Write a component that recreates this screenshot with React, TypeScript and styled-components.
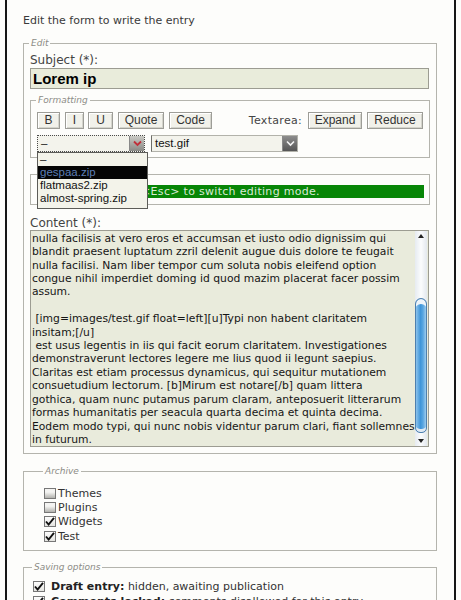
import React from "react";
import styled, { createGlobalStyle } from "styled-components";

const GlobalStyle = createGlobalStyle`
  html, body {
    margin: 0;
    padding: 0;
    overflow: hidden;
    background: #fdfdfb;
    font-family: "DejaVu Sans", Verdana, sans-serif;
  }
`;

const Frame = styled.div`
  box-sizing: border-box;
  height: 600px;
  margin: 0 5px;
  padding: 14px 17px 0 16px;
  border-left: 2px solid #161616;
  border-right: 2px solid #161616;
  background: #fdfdfb;
  overflow: hidden;
`;

const Intro = styled.p`
  margin: 0;
  font-size: 11px;
  line-height: 13px;
  color: #3a3a3a;
`;

const Fieldset = styled.fieldset<{ $top: number; $pad: string }>`
  margin: ${(p) => p.$top}px 0 0;
  padding: ${(p) => p.$pad};
  border: 1px solid #b4b4ad;
  min-width: 0;
  position: relative;
`;

const Legend = styled.legend`
  margin-left: -1px;
  padding: 0 2px;
  font-size: 9px;
  line-height: 11px;
  font-style: italic;
  color: #8c8c86;
`;

const Label = styled.div<{ $top: number }>`
  margin-top: ${(p) => p.$top}px;
  font-size: 12px;
  line-height: 14px;
  color: #444;
`;

const SubjectInput = styled.div`
  box-sizing: border-box;
  height: 21px;
  margin-top: 1px;
  width: 399px;
  padding: 0 2px;
  border: 1px solid #9c9c92;
  background: #e9ecdb;
  font-family: "Liberation Sans", Arial, sans-serif;
  font-weight: bold;
  font-size: 15px;
  line-height: 19px;
  color: #000;
`;

const ButtonRow = styled.div`
  display: flex;
  align-items: center;
  height: 17px;
`;

const ToolButton = styled.button<{ $w: number; $gap?: number }>`
  box-sizing: border-box;
  width: ${(p) => p.$w}px;
  height: 17px;
  margin-left: ${(p) => p.$gap ?? 5}px;
  padding: 0;
  border: 1px solid #9d9d97;
  border-radius: 0;
  box-shadow: inset 1px 1px 0 #ffffff, inset -1px -1px 0 #d4d4cc;
  background: #f1f1ea;
  font-family: "Liberation Sans", Arial, sans-serif;
  font-size: 12px;
  line-height: 15px;
  color: #333;
  &:first-child {
    margin-left: 0;
  }
`;

const Spacer = styled.div`
  flex: 1;
`;

const AreaCaption = styled.span`
  font-size: 11px;
  color: #444;
  letter-spacing: 0.3px;
`;

const SelectRow = styled.div`
  display: flex;
  gap: 6px;
  margin-top: 6px;
  height: 17px;
`;

const SelectBox = styled.div<{ $w: number; $focused?: boolean }>`
  position: relative;
  box-sizing: border-box;
  width: ${(p) => p.$w}px;
  height: 17px;
  display: flex;
  border: 1px solid ${(p) => (p.$focused ? "#4a4a4a" : "#b2b2aa")};
  border-style: ${(p) => (p.$focused ? "dotted" : "solid")};
  border-left-color: ${(p) => (p.$focused ? "#4a4a4a" : "#6d6d68")};
  background: #f3f3ec;
`;

const SelectText = styled.span`
  flex: 1;
  padding-left: 3px;
  font-family: "Liberation Sans", Arial, sans-serif;
  font-size: 11.5px;
  line-height: 15px;
  color: #111;
`;

const ArrowButton = styled.span<{ $dark?: boolean }>`
  width: 14px;
  height: 15px;
  display: flex;
  align-items: center;
  justify-content: center;
  border-left: 1px solid #888;
  background: ${(p) =>
    p.$dark
      ? "linear-gradient(#8d8d8d, #555)"
      : "linear-gradient(#c9c9c4, #8a8a86)"};
`;

const Popup = styled.ul`
  position: absolute;
  top: 16px;
  left: -1px;
  width: 111px;
  margin: 0;
  padding: 0 0 3px;
  list-style: none;
  box-sizing: border-box;
  border: 1px solid #5c5c58;
  background: #f3f3ea;
  z-index: 5;
`;

const PopupItem = styled.li<{ $active?: boolean }>`
  height: 13px;
  padding-left: 2px;
  font-family: "Liberation Sans", Arial, sans-serif;
  font-size: 11.5px;
  line-height: 13px;
  color: ${(p) => (p.$active ? "#5d7fb6" : "#111")};
  background: ${(p) => (p.$active ? "#050505" : "transparent")};
`;

const ModeBar = styled.div`
  height: 13px;
  background: #078607;
  color: #d9ead6;
  font-size: 11px;
  line-height: 13px;
  text-align: center;
  letter-spacing: 0.3px;
`;

const TextArea = styled.div`
  box-sizing: border-box;
  width: 399px;
  height: 217px;
  display: flex;
  border: 1px solid #9c9c92;
  background: #e9ebdc;
`;

const TextPane = styled.div`
  flex: 1;
  overflow: hidden;
  padding-left: 1px;
`;

const TextBody = styled.div`
  margin-top: -12.6px;
  white-space: pre;
  font-size: 10.75px;
  line-height: 13.4px;
  color: #151515;
`;

const ScrollBar = styled.div`
  width: 12px;
  margin-right: 1px;
  display: flex;
  flex-direction: column;
  background: linear-gradient(90deg, #e6ebf1, #fbfcfd 50%, #e3e8ee);
`;

const ScrollArrow = styled.div`
  height: 10px;
  display: flex;
  align-items: center;
  justify-content: center;
`;

const ScrollTrack = styled.div`
  flex: 1;
  display: flex;
  flex-direction: column;
`;

const Thumb = styled.div`
  box-sizing: border-box;
  border: 1px solid #4d7fae;
  border-radius: 6px 6px 5px 5px;
  background: linear-gradient(90deg, #8cc3ec, #3f95d9 45%, #5aa6e0 70%, #9ccbee);
  box-shadow: inset 0 6px 0 -1px #eef4fa, inset 0 -4px 0 -1px #dfe9f3;
`;

const CheckList = styled.div`
  display: flex;
  flex-direction: column;
`;

const CheckRow = styled.div<{ $gap: number }>`
  display: flex;
  align-items: center;
  gap: ${(p) => p.$gap}px;
  height: 14.4px;
  font-size: 11px;
  color: #333;
  b {
    font-weight: bold;
    color: #222;
  }
`;

const Box = styled.span<{ $checked?: boolean }>`
  box-sizing: border-box;
  width: 12px;
  height: 11px;
  display: flex;
  align-items: center;
  justify-content: center;
  border: 1px solid #777;
  background: ${(p) =>
    p.$checked
      ? "linear-gradient(#fdfdfd, #e4e4e0)"
      : "linear-gradient(#f4f4f2 35%, #b2b2ae)"};
`;

const Check = ({ checked }: { checked?: boolean }) => (
  <Box $checked={checked}>
    {checked && (
      <svg width="10" height="9" viewBox="0 0 10 9">
        <path d="M1 4.5 L3.6 7.5 L9 0.8" fill="none" stroke="#111" strokeWidth="1.9" />
      </svg>
    )}
  </Box>
);

const contentLines = [
  "molestie consequat, vel illum dolore eu feugiat",
  "nulla facilisis at vero eros et accumsan et iusto odio dignissim qui",
  "blandit praesent luptatum zzril delenit augue duis dolore te feugait",
  "nulla facilisi. Nam liber tempor cum soluta nobis eleifend option",
  "congue nihil imperdiet doming id quod mazim placerat facer possim",
  "assum.",
  "",
  " [img=images/test.gif float=left][u]Typi non habent claritatem",
  "insitam;[/u]",
  " est usus legentis in iis qui facit eorum claritatem. Investigationes",
  "demonstraverunt lectores legere me lius quod ii legunt saepius.",
  "Claritas est etiam processus dynamicus, qui sequitur mutationem",
  "consuetudium lectorum. [b]Mirum est notare[/b] quam littera",
  "gothica, quam nunc putamus parum claram, anteposuerit litterarum",
  "formas humanitatis per seacula quarta decima et quinta decima.",
  "Eodem modo typi, qui nunc nobis videntur parum clari, fiant sollemnes",
  "in futurum.",
];

const archives = [
  { name: "Themes", on: false },
  { name: "Plugins", on: false },
  { name: "Widgets", on: true },
  { name: "Test", on: true },
];

const files = ["–", "gespaa.zip", "flatmaas2.zip", "almost-spring.zip"];

export default function App() {
  const thumbOffset = 57;
  const thumbHeight = 135;

  return (
    <>
      <GlobalStyle />
      <Frame>
        <Intro>Edit the form to write the entry</Intro>

        <Fieldset $top={11} $pad="0 6px 6px 6px">
          <Legend>Edit</Legend>
          <Label $top={4}>Subject (*):</Label>
          <SubjectInput>Lorem ip</SubjectInput>

          <Fieldset $top={6} $pad="6px 6px 5px 6px">
            <Legend>Formatting</Legend>
            <ButtonRow>
              <ToolButton $w={23}>B</ToolButton>
              <ToolButton $w={19}>I</ToolButton>
              <ToolButton $w={25} $gap={4}>U</ToolButton>
              <ToolButton $w={46}>Quote</ToolButton>
              <ToolButton $w={43}>Code</ToolButton>
              <Spacer />
              <AreaCaption>Textarea:</AreaCaption>
              <ToolButton $w={54} $gap={6}>Expand</ToolButton>
              <ToolButton $w={56}>Reduce</ToolButton>
            </ButtonRow>
            <SelectRow>
              <SelectBox $w={108} $focused>
                <SelectText>–</SelectText>
                <ArrowButton>
                  <svg width="9" height="7" viewBox="0 0 9 7">
                    <path d="M1 1.5 L4.5 5 L8 1.5" fill="none" stroke="#c0303a" strokeWidth="1.8" />
                  </svg>
                </ArrowButton>
                <Popup>
                  {files.map((f, i) => (
                    <PopupItem key={f} $active={i === 1}>
                      {f}
                    </PopupItem>
                  ))}
                </Popup>
              </SelectBox>
              <SelectBox $w={147}>
                <SelectText>test.gif</SelectText>
                <ArrowButton $dark>
                  <svg width="9" height="7" viewBox="0 0 9 7">
                    <path d="M1 1.5 L4.5 5 L8 1.5" fill="none" stroke="#f4f4f4" strokeWidth="1.6" />
                  </svg>
                </ArrowButton>
              </SelectBox>
            </SelectRow>
          </Fieldset>

          <Fieldset $top={16} $pad="10px 5px 6px 6px">
            <ModeBar>&lt;Esc&gt; to switch editing mode.</ModeBar>
          </Fieldset>

          <Label $top={11}>Content (*):</Label>
          <TextArea>
            <TextPane>
              <TextBody>{contentLines.join("\n")}</TextBody>
            </TextPane>
            <ScrollBar>
              <ScrollArrow>
                <svg width="6" height="4" viewBox="0 0 6 4">
                  <path d="M0 4 L3 0 L6 4 Z" fill="#222" />
                </svg>
              </ScrollArrow>
              <ScrollTrack>
                <Thumb style={{ marginTop: thumbOffset, height: thumbHeight }} />
              </ScrollTrack>
              <ScrollArrow>
                <svg width="6" height="4" viewBox="0 0 6 4">
                  <path d="M0 0 L3 4 L6 0 Z" fill="#222" />
                </svg>
              </ScrollArrow>
            </ScrollBar>
          </TextArea>
        </Fieldset>

        <Fieldset $top={12} $pad="9px 6px 6px 20px">
          <Legend>Archive</Legend>
          <CheckList>
            {archives.map((a) => (
              <CheckRow key={a.name} $gap={2}>
                <Check checked={a.on} />
                {a.name}
              </CheckRow>
            ))}
          </CheckList>
        </Fieldset>

        <Fieldset $top={11} $pad="7px 6px 8px 9px">
          <Legend>Saving options</Legend>
          <CheckList>
            <CheckRow $gap={6}>
              <Check checked />
              <span>
                <b>Draft entry:</b> hidden, awaiting publication
              </span>
            </CheckRow>
            <CheckRow $gap={6}>
              <Check checked />
              <span>
                <b>Comments locked:</b> comments disallowed for this entry
              </span>
            </CheckRow>
          </CheckList>
        </Fieldset>
      </Frame>
    </>
  );
}
